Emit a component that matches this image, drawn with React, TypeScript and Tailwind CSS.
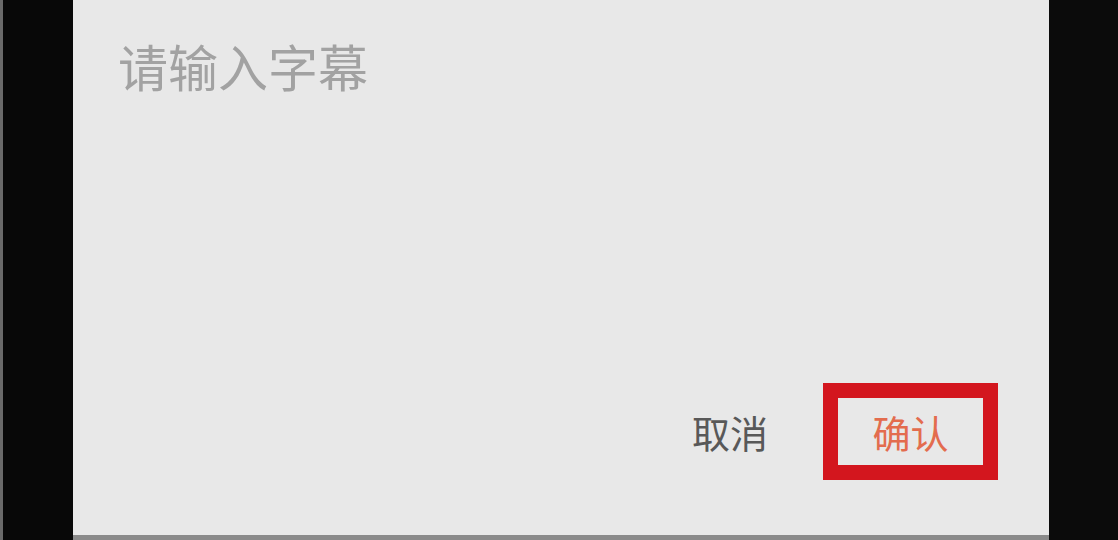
export default function App() {
  return (
    <div
      className="flex h-[540px] w-[1118px] overflow-hidden bg-[#0a0a0a]"
      style={{ fontFamily: '"Noto Sans CJK SC", "Noto Sans", sans-serif' }}
    >
      <div className="h-full w-[73px] shrink-0 border-l-[3px] border-[#6a6a6a] bg-[#080808]" />
      <div className="flex h-full w-[976px] shrink-0 flex-col">
        <div className="flex flex-1 flex-col bg-[#e8e8e8] pl-[45px] pr-[51px] pb-[55px] pt-[40px]">
          <div className="text-[50px] leading-none text-[#a2a2a2]">请输入字幕</div>
          <div className="flex-1" />
          <div className="flex items-center justify-end gap-[55px]">
            <button className="text-[38px] leading-none text-[#585858]">取消</button>
            <button className="flex h-[97px] w-[175px] items-center justify-center border-[15px] border-[#d3161e] text-[38px] leading-none text-[#e36c4e]">
              确认
            </button>
          </div>
        </div>
        <div className="h-[5px] bg-[#8a8a8a]" />
      </div>
      <div className="h-full flex-1 bg-[#0b0b0b]" />
    </div>
  )
}
